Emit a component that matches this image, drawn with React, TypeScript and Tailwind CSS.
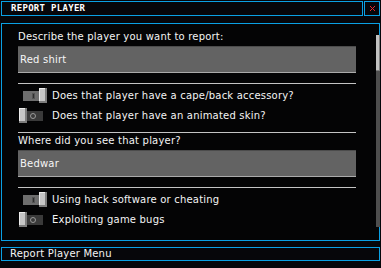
import React from "react";

const Toggle = ({ on }: { on: boolean }) => {
  return (
    <div className="relative w-[28px] h-[15px] shrink-0 ml-[1px]">
      <div
        className={
          on
            ? "absolute left-[4px] top-[3px] w-[20px] h-[10px] bg-[#6e6e6e] flex items-center justify-center"
            : "absolute left-[4px] top-[3px] w-[20px] h-[10px] bg-[#3a3a3a] flex items-center justify-center"
        }
      >
        {on ? (
          <div className="w-[3px] h-[6px] bg-[#2e2e2e] border border-[#555]" />
        ) : (
          <div className="w-[6px] h-[6px] rounded-full border border-[#9a9a9a]" />
        )}
      </div>
      <div
        className={
          on
            ? "absolute left-[20px] top-0 w-[8px] h-[15px] bg-[#c6c6c6] shadow-[inset_-2px_-2px_0_#7d7d7d,inset_1px_1px_0_#ececec]"
            : "absolute left-0 top-0 w-[8px] h-[15px] bg-[#c6c6c6] shadow-[inset_-2px_-2px_0_#7d7d7d,inset_1px_1px_0_#ececec]"
        }
      />
    </div>
  );
};

const ToggleRow = ({ on, label, className }: { on: boolean; label: string; className: string }) => (
  <div className={"flex items-center h-[15px] " + className}>
    <Toggle on={on} />
    <span className="ml-[5px] text-[10px] leading-[10px] tracking-[0.2px] text-[#f4f4f4] whitespace-nowrap">{label}</span>
  </div>
);

const TextBox = ({ value, className }: { value: string; className: string }) => (
  <div
    className={
      "w-[338px] h-[27px] bg-[#636363] border-t border-t-[#4c4c4c] border-b border-b-[#ababab] flex items-center pl-[2px] text-[10px] leading-[10px] tracking-[0.2px] text-[#f6f6f6] " +
      className
    }
  >
    {value}
  </div>
);

const App: React.FC = () => {
  return (
    <div className="w-[381px] h-[268px] bg-[#06060a] overflow-hidden font-['DejaVu_Sans',sans-serif] text-white">
      {/* header */}
      <div className="flex pt-[1px] pl-[1px] gap-[1px]">
        <div className="w-[362px] h-[15px] border border-[#0aa0e4] flex items-center pl-[9px]">
          <span className="font-['DejaVu_Sans_Mono',monospace] font-bold text-[9px] leading-[9px] tracking-[0.3px] uppercase">
            Report Player
          </span>
        </div>
        <div className="w-[16px] h-[15px] border border-[#0aa0e4] flex items-center justify-center">
          <svg width="5" height="5" viewBox="0 0 5 5" shapeRendering="crispEdges">
            <rect x="0" y="0" width="1" height="1" fill="#ea2a2a" />
            <rect x="4" y="0" width="1" height="1" fill="#ea2a2a" />
            <rect x="1" y="1" width="1" height="1" fill="#ea2a2a" />
            <rect x="3" y="1" width="1" height="1" fill="#ea2a2a" />
            <rect x="2" y="2" width="1" height="1" fill="#ea2a2a" />
            <rect x="1" y="3" width="1" height="1" fill="#ea2a2a" />
            <rect x="3" y="3" width="1" height="1" fill="#ea2a2a" />
            <rect x="0" y="4" width="1" height="1" fill="#ea2a2a" />
            <rect x="4" y="4" width="1" height="1" fill="#ea2a2a" />
          </svg>
        </div>
      </div>

      {/* main panel */}
      <div className="relative ml-[1px] mt-[7px] w-[379px] h-[218px] border border-[#0aa0e4] bg-[#040405] pl-[16px] pt-[8px] flex flex-col">
        <div className="h-[10px] text-[10px] leading-[10px] tracking-[0.2px] text-[#f4f4f4] whitespace-nowrap">
          Describe the player you want to report:
        </div>
        <TextBox value="Red shirt" className="mt-[4px]" />
        <div className="mt-[10px] w-[338px] h-[1px] bg-[#c4c4c4]" />
        <ToggleRow on={true} label="Does that player have a cape/back accessory?" className="mt-[4px]" />
        <ToggleRow on={false} label="Does that player have an animated skin?" className="mt-[5px]" />
        <div className="mt-[9px] w-[338px] h-[1px] bg-[#c4c4c4]" />
        <div className="mt-[3px] h-[10px] text-[10px] leading-[10px] tracking-[0.2px] text-[#f4f4f4] whitespace-nowrap">
          Where did you see that player?
        </div>
        <TextBox value="Bedwar" className="mt-[4px]" />
        <div className="mt-[10px] w-[338px] h-[1px] bg-[#c4c4c4]" />
        <ToggleRow on={true} label="Using hack software or cheating" className="mt-[4px]" />
        <ToggleRow on={false} label="Exploiting game bugs" className="mt-[5px]" />

        {/* scrollbar */}
        <div className="absolute left-[374px] top-[11px] w-[4px] h-[192px] bg-[#4e4e4e]">
          <div className="w-[4px] h-[36px] bg-[#c2c2c2] shadow-[inset_-1px_-1px_0_#7f7f7f]" />
        </div>
      </div>

      {/* footer */}
      <div className="ml-[1px] mt-[6px] w-[379px] h-[14px] border border-[#0aa0e4] flex items-center pl-[8px]">
        <span className="text-[10px] leading-[10px] tracking-[0.2px] text-[#f4f4f4]">Report Player Menu</span>
      </div>
    </div>
  );
};

export default App;
